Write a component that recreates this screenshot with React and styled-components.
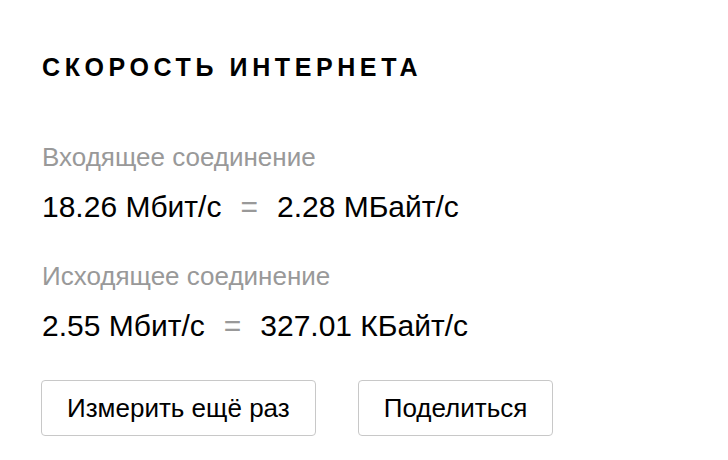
import React from "react";
import styled, { createGlobalStyle } from "styled-components";

const Global = createGlobalStyle`
  body {
    margin: 0;
    background: #fff;
    font-family: "Liberation Sans", Arial, sans-serif;
    color: #000;
  }
`;

const Panel = styled.div`
  padding: 52px 0 0 42px;
`;

const Title = styled.h2`
  margin: 0 0 60px;
  font-size: 25px;
  line-height: 30px;
  font-weight: bold;
  letter-spacing: 4.6px;
`;

const Block = styled.div`
  margin-bottom: 37px;
`;

const Label = styled.div`
  color: #999;
  font-size: 26px;
  line-height: 30px;
`;

const Value = styled.div`
  margin-top: 18px;
  font-size: 30px;
  line-height: 34px;
  display: flex;
  align-items: center;
  gap: 19px;
`;

const Eq = styled.span`
  color: #999;
`;

const Actions = styled.div`
  display: flex;
  gap: 42px;
  margin-top: 7px;
  margin-left: -1px;
`;

const Button = styled.button`
  height: 56px;
  padding: 0 25px;
  border: 1px solid #c8c8c8;
  border-radius: 4px;
  background: #fff;
  font-family: inherit;
  font-size: 26px;
  color: #000;
  cursor: pointer;
`;

const results = [
  { label: "Входящее соединение", bits: "18.26 Мбит/с", bytes: "2.28 МБайт/с" },
  { label: "Исходящее соединение", bits: "2.55 Мбит/с", bytes: "327.01 КБайт/с" },
];

const App = () => (
  <>
    <Global />
    <Panel>
      <Title>СКОРОСТЬ ИНТЕРНЕТА</Title>
      {results.map((r) => (
        <Block key={r.label}>
          <Label>{r.label}</Label>
          <Value>
            <span>{r.bits}</span>
            <Eq>=</Eq>
            <span>{r.bytes}</span>
          </Value>
        </Block>
      ))}
      <Actions>
        <Button>Измерить ещё раз</Button>
        <Button>Поделиться</Button>
      </Actions>
    </Panel>
  </>
);

export default App;
